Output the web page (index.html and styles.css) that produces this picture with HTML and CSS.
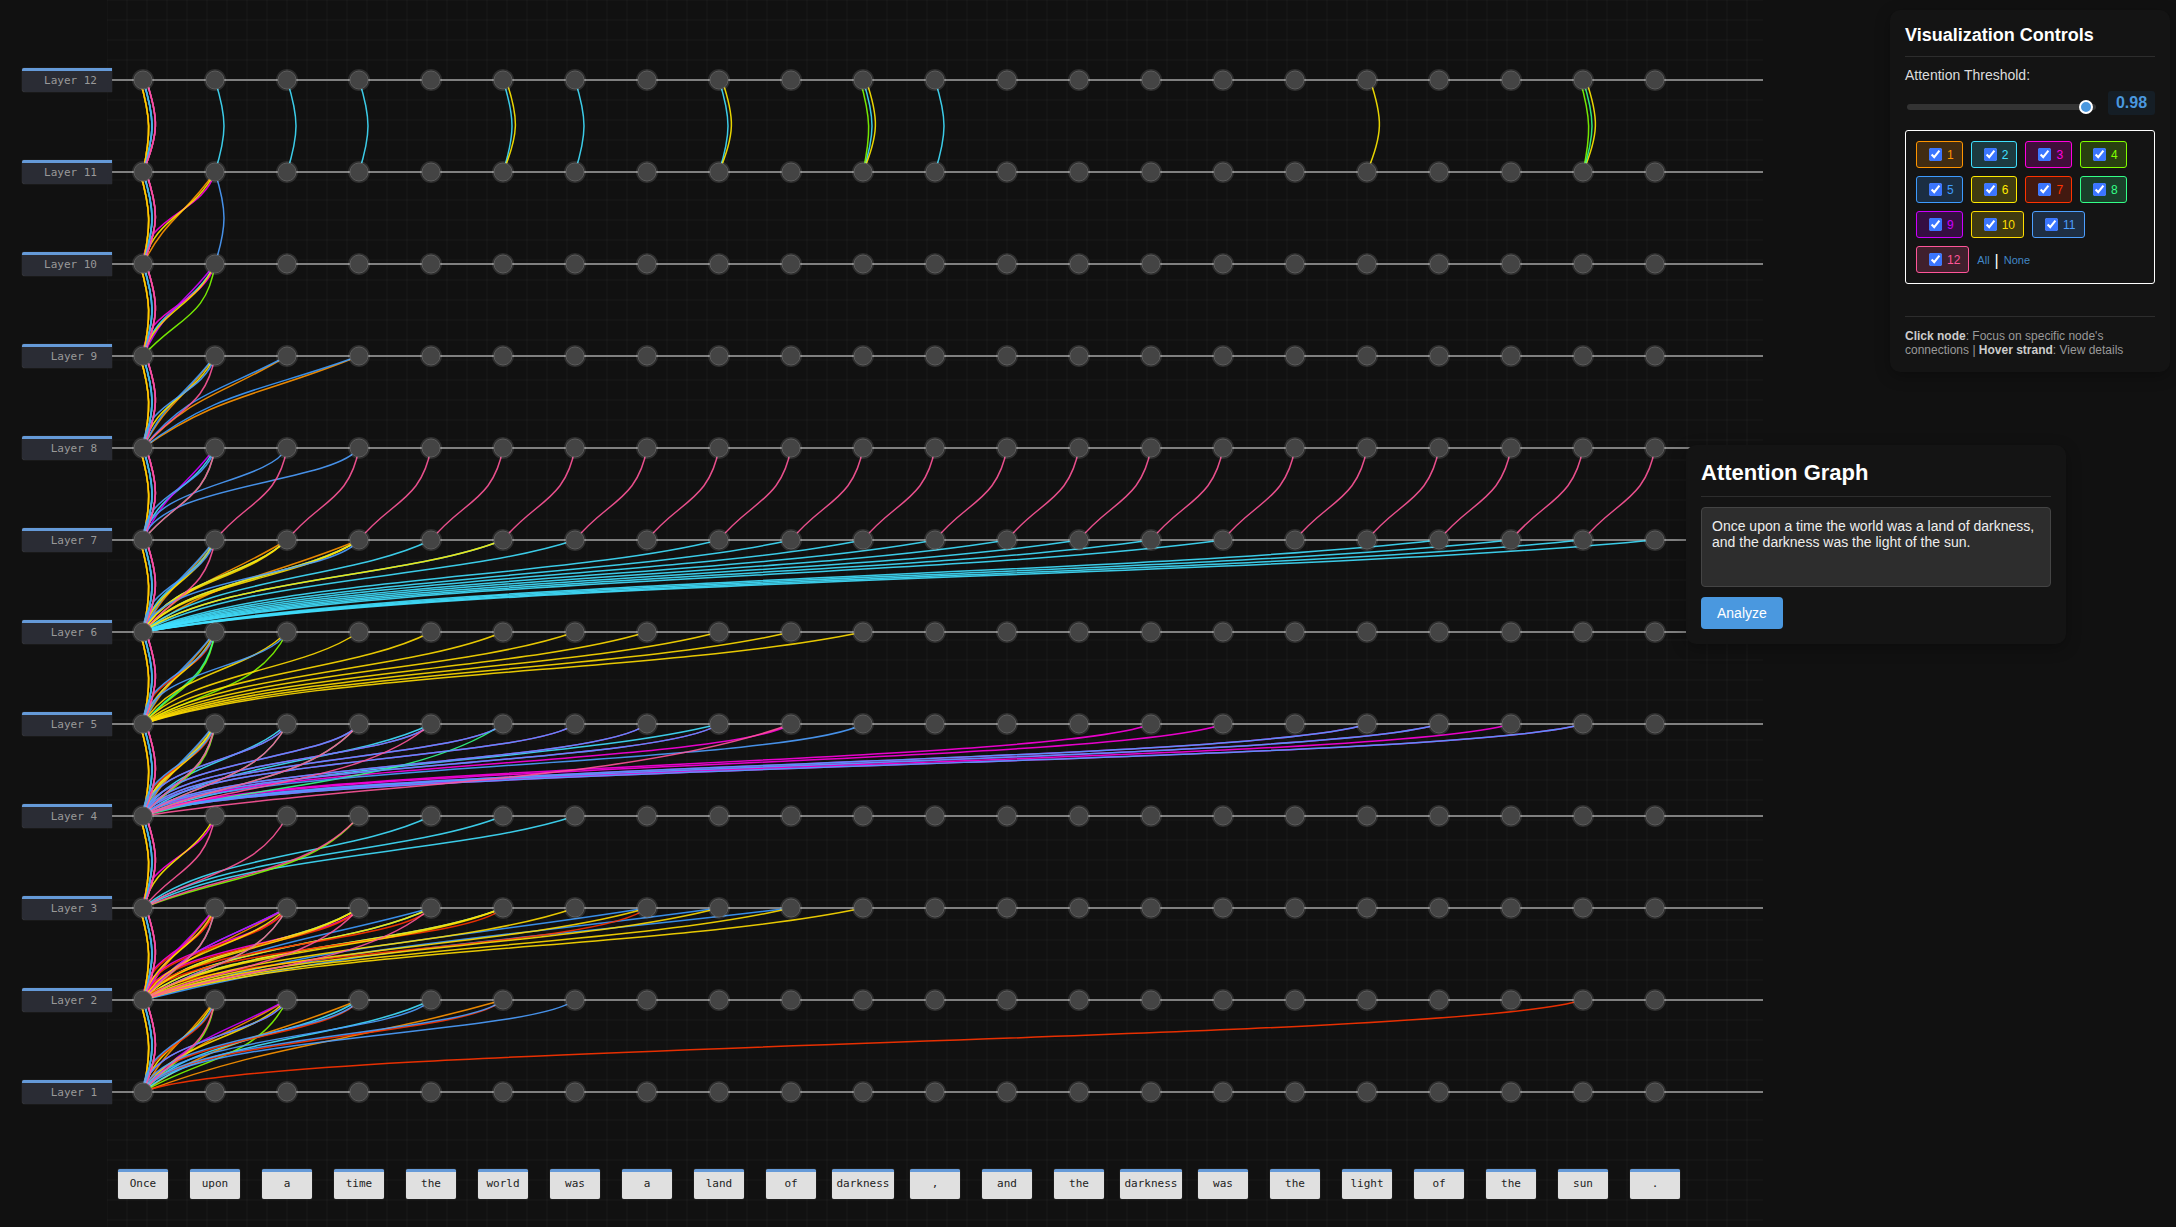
FILE: index.html
```html
<!DOCTYPE html>
<html lang="en">
<head>
<meta charset="utf-8">
<title>Attention Graph</title>
<link rel="stylesheet" href="styles.css">
</head>
<body>
<main class="graph">
  <ol class="layers" id="layers"></ol>
  <div class="canvas">
    <svg class="plot" id="plot" role="img" aria-label="Attention strands between layers">
      <g id="lines"></g>
      <g id="strands"></g>
      <g id="nodes"></g>
    </svg>
    <ul class="tokens" id="tokens"></ul>
  </div>
</main>

<aside class="panel controls">
  <h2 class="panel-title">Visualization Controls</h2>
  <label class="threshold-label" for="threshold">Attention Threshold:</label>
  <div class="threshold">
    <input class="slider" id="threshold" type="range" min="0" max="1" step="0.01" value="0.98">
    <output class="threshold-value" for="threshold">0.98</output>
  </div>
  <div class="heads">
    <label class="head h1"><input type="checkbox" checked>1</label>
    <label class="head h2"><input type="checkbox" checked>2</label>
    <label class="head h3"><input type="checkbox" checked>3</label>
    <label class="head h4"><input type="checkbox" checked>4</label>
    <label class="head h5"><input type="checkbox" checked>5</label>
    <label class="head h6"><input type="checkbox" checked>6</label>
    <label class="head h7"><input type="checkbox" checked>7</label>
    <label class="head h8"><input type="checkbox" checked>8</label>
    <label class="head h9"><input type="checkbox" checked>9</label>
    <label class="head h10"><input type="checkbox" checked>10</label>
    <label class="head h11"><input type="checkbox" checked>11</label>
    <label class="head h12"><input type="checkbox" checked>12</label>
    <div class="select-links"><a href="#all">All</a><span>|</span><a href="#none">None</a></div>
  </div>
  <p class="hint"><b>Click node</b>: Focus on specific node's connections | <b>Hover strand</b>: View details</p>
</aside>

<section class="panel prompt">
  <h1 class="panel-title prompt-title">Attention Graph</h1>
  <textarea class="prompt-text" aria-label="Text to analyze">Once upon a time the world was a land of darkness, and the darkness was the light of the sun.</textarea>
  <button class="analyze" type="button">Analyze</button>
</section>
<script src="graph.js"></script>
</body>
</html>
```
FILE: styles.css
```css
* { box-sizing: border-box; }

body {
  margin: 0;
  background: #111;
  color: #fff;
  font-family: "Liberation Sans", Arial, sans-serif;
  position: relative;
}

/* Graph */
.graph {
  display: flex;
  min-height: 100vh;
  padding-right: 413px;
}

.layers {
  list-style: none;
  flex: 0 0 85px;
  min-width: 0;
  display: flex;
  flex-direction: column;
  gap: 68px;
  margin: 0 0 0 22px;
  padding: 68px 0 0;
  z-index: 1;
}

.layer {
  width: 90px;
  height: 24px;
  padding-right: 15px;
  border-top: 3px solid #659ad8;
  border-radius: 2px 0 0 3px;
  background: #2a2c34;
  box-shadow: 0 0 1px #666;
  color: #999;
  font: 11px/20px "DejaVu Sans Mono", monospace;
  text-align: right;
}

.canvas {
  flex: 1;
  display: grid;
  background:
    linear-gradient(rgba(255, 255, 255, 0.014) 2px, transparent 2px) 0 -1px / 20px 20px,
    linear-gradient(90deg, rgba(255, 255, 255, 0.014) 2px, transparent 2px) -1px 0 / 20px 20px;
}

.plot {
  grid-area: 1 / 1;
  width: 100%;
  height: 100%;
}

.rail { stroke: #808080; stroke-width: 2; }
.strand { fill: none; stroke-width: 1.5; stroke-opacity: 0.9; }
.halo { fill: #fff; fill-opacity: 0.12; }
.node { fill: #444; stroke: #5c5c5c; stroke-width: 1; }

.tokens {
  grid-area: 1 / 1;
  align-self: end;
  display: flex;
  list-style: none;
  margin: 0;
  padding: 0 0 28px;
}

.slot {
  flex: 0 0 72px;
  display: flex;
  justify-content: center;
}

.token {
  min-width: 50px;
  height: 30px;
  padding: 0 5px;
  border-top: 3px solid #659ad8;
  border-radius: 2px;
  background: #e0e0e0;
  box-shadow: 0 0 1px #888;
  color: #222;
  font: 11px/24px "DejaVu Sans Mono", monospace;
  text-align: center;
}

/* Floating panels */
.panel {
  position: absolute;
  z-index: 2;
  padding: 15px;
  border-radius: 10px;
  background: #141414;
  box-shadow: 0 4px 15px rgba(0, 0, 0, 0.3);
}

.controls { top: 10px; right: 6px; width: 280px; }
.prompt { top: 445px; right: 110px; width: 380px; }

.panel-title {
  margin: 0 0 10px;
  padding-bottom: 11px;
  border-bottom: 1px solid #2d2d2d;
  font-size: 18px;
  line-height: 20px;
}

.prompt-title { font-size: 22px; line-height: 25px; }

.threshold-label {
  display: block;
  color: #ddd;
  font-size: 14px;
  line-height: 16px;
}

.threshold {
  display: flex;
  justify-content: space-between;
  margin: 8px 0 15px;
}

.slider {
  appearance: none;
  width: 189px;
  height: 6px;
  margin: 13px 0 0 2px;
  border-radius: 3px;
  background: #333;
}

.slider::-webkit-slider-thumb {
  appearance: none;
  width: 14px;
  height: 14px;
  border: 2px solid #fff;
  border-radius: 50%;
  background: #4a98df;
}

.threshold-value {
  width: 47px;
  height: 24px;
  border-radius: 3px;
  background: #151e26;
  color: #4a98df;
  font-size: 16px;
  font-weight: bold;
  line-height: 23px;
  text-align: center;
}

.heads {
  display: flex;
  flex-wrap: wrap;
  gap: 8px;
  padding: 10px;
  border: 1px solid #fff;
  border-radius: 3px;
}

.head {
  display: flex;
  align-items: center;
  height: 27px;
  padding: 0 8px;
  border: 1px solid;
  border-radius: 3px;
  font-size: 12px;
}

.head input {
  width: 13px;
  height: 13px;
  margin: 0 5px 0 4px;
  accent-color: #3b76ff;
}

.h1 { color: #ff9500; background: #412c12; }
.h2 { color: #40e0ff; background: #1c3a40; }
.h3 { color: #ff00e0; background: #400e3a; }
.h4 { color: #80ff00; background: #294010; }
.h5 { color: #3d9bff; background: #1b2e43; }
.h6 { color: #ffea00; background: #403c10; }
.h7 { color: #ff3300; background: #421910; }
.h8 { color: #33ff88; background: #1a402a; }
.h9 { color: #cc00ff; background: #350e42; }
.h10 { color: #ffdd00; background: #403a10; }
.h11 { color: #4d9fff; background: #1e2e43; }
.h12 { color: #ff5599; background: #40202d; }

.select-links {
  display: flex;
  align-items: center;
  gap: 5px;
  font-size: 11px;
}

.select-links a { color: #4287c6; text-decoration: none; }
.select-links span { font-size: 16px; line-height: 20px; padding-top: 2px; }

.hint {
  margin: 32px 0 0;
  padding-top: 12px;
  border-top: 1px solid #2d2d2d;
  color: #999;
  font-size: 12px;
  line-height: 14px;
}

.hint b { color: #ccc; }

.prompt-text {
  display: block;
  width: 100%;
  height: 80px;
  padding: 10px;
  border: 1px solid #444;
  border-radius: 4px;
  background: #2d2d2d;
  color: #eee;
  font: 14px/16px "Liberation Sans", Arial, sans-serif;
  resize: none;
}

.analyze {
  height: 32px;
  margin-top: 10px;
  padding: 0 16px;
  border: 0;
  border-radius: 4px;
  background: #4a98df;
  color: #fff;
  font: 14px/16px "Liberation Sans", Arial, sans-serif;
}
```
FILE: graph.js
```js
const NS = 'http://www.w3.org/2000/svg';
const words = ['Once', 'upon', 'a', 'time', 'the', 'world', 'was', 'a', 'land', 'of', 'darkness', ',',
  'and', 'the', 'darkness', 'was', 'the', 'light', 'of', 'the', 'sun', '.'];
const colors = ['', '#ff9500', '#40e0ff', '#ff00e0', '#80ff00', '#3d9bff', '#ffea00', '#ff3300',
  '#33ff88', '#cc00ff', '#ffdd00', '#4d9fff', '#ff5599'];
const LAYERS = 12, STEP = 72, ROW = 92;

// Strands that fan in to the first token of the layer below: layer -> source token -> heads.
const fan = {
  11: { 1: [1, 3, 6] },
  10: { 1: [2, 3, 4, 9, 10] },
  9: { 1: [1, 5, 6, 11, 12], 2: [1, 5], 3: [1, 5] },
  8: { 1: [2, 8, 9, 11, 12], 2: [11], 3: [11] },
  7: { 1: [1, 2, 5, 10, 11, 12], 2: [1, 2, 6, 10], 3: [1, 2, 6, 10, 11], 4: [2], 5: [2, 6], 6: [2], 8: [2], 9: [2],
    10: [2], 11: [2], 12: [2], 13: [2], 14: [2], 15: [2], 18: [2], 19: [2], 20: [2], 21: [2] },
  6: { 1: [1, 4, 5, 7, 8, 10, 11], 2: [4, 10, 11], 3: [10], 4: [10], 5: [10], 6: [10], 7: [10], 8: [10], 9: [10], 10: [10] },
  5: { 1: [1, 2, 4, 5, 6, 7, 8, 10, 11, 12], 2: [2, 3, 8, 11, 12], 3: [3, 8, 11, 12], 4: [2, 3, 11, 12], 5: [3, 8, 11],
    6: [3, 11], 7: [3, 11], 8: [2, 3, 11], 9: [3, 12], 10: [11], 14: [3], 15: [3], 17: [3, 11], 18: [3, 11], 19: [3], 20: [3, 11] },
  4: { 1: [3, 6, 12], 2: [12], 3: [4, 12], 4: [2], 5: [2], 6: [2] },
  3: { 1: [1, 3, 7, 8, 9, 10, 12], 2: [1, 3, 5, 7, 8, 9, 10, 12], 3: [2, 3, 6, 7, 10, 12], 4: [2, 5, 6, 7, 12],
    5: [2, 6, 7, 10], 6: [10], 7: [5, 7, 10], 8: [5, 10], 9: [5, 10], 10: [10] },
  2: { 1: [1, 4, 6, 7, 11, 12], 2: [1, 3, 4, 9, 10, 11], 3: [1, 2, 7, 11], 4: [2, 11], 5: [1, 7, 11], 6: [11], 20: [7] }
};
// Strands that stay on their own token.
const self = {
  12: { 1: [2], 2: [2], 3: [2], 5: [2, 6], 6: [2], 8: [2, 6], 10: [2, 4, 6], 11: [2], 17: [6], 20: [4, 6, 8] },
  11: { 1: [11] }
};

const nodeX = i => 36 + STEP * i;
const nodeY = layer => 80 + ROW * (LAYERS - layer);

function add(parent, name, attrs) {
  const el = document.createElementNS(NS, name);
  for (const key in attrs) el.setAttribute(key, attrs[key]);
  document.getElementById(parent).appendChild(el);
}

// Sideways push of a strand, by bend family, number of tokens crossed and lane.
function bend(family, span, lane) {
  const shift = lane < 0 ? 2 : 0;
  if (family === 0) return (span === 1 ? 11 : 13) + shift;
  if (family === 1) return span === 1 ? -4 + shift : lane < 0 && span > 3 ? -3 : -12 + 2 * shift;
  if (family === 2) return (span === 1 ? -4 : -8) + shift;
  return (span === 1 ? -6 : span < 7 ? -11 : -5) + shift;
}
const near = [0.25, 0.42, 0.26, 0.1];
const far = [0.32, 0.36, 0.22, 0.08];

function strand(layer, from, to, head) {
  const x0 = nodeX(from), y0 = nodeY(layer), x3 = nodeX(to), y3 = y0 + ROW;
  const lane = (head + 1) % 3 === 0 ? 0 : head % 3 === 0 ? 1 : -1;
  const dx = x3 - x0, span = from - to;
  let d;
  if (span === 0) {
    const push = 12 + 4 * lane;
    d = `M${x0 + 3 * lane} ${y0}C${x0 + push} ${y0 + 38} ${x0 + push} ${y0 + 54} ${x3} ${y3}`;
  } else {
    const len = Math.hypot(dx, ROW), family = head % 4;
    const push = bend(family, span, lane);
    const px = push * ROW / len, py = push * -dx / len;
    const c = [x0 + near[family] * dx + px, y0 + ROW / 2 + py, x3 - far[family] * dx + px, y3 - ROW / 2 + py];
    d = `M${x0} ${y0}C${c.map(n => n.toFixed(1)).join(' ')} ${x3} ${y3}`;
  }
  add('strands', 'path', { class: 'strand', d, stroke: colors[head] });
}

for (let layer = LAYERS; layer >= 1; layer--) {
  const label = document.createElement('li');
  label.className = 'layer';
  label.textContent = 'Layer ' + layer;
  document.getElementById('layers').appendChild(label);
  const y = nodeY(layer);
  add('lines', 'line', { class: 'rail', x1: 0, x2: '100%', y1: y, y2: y });
  for (let i = 0; i < words.length; i++) {
    add('nodes', 'circle', { class: 'halo', cx: nodeX(i), cy: y, r: 11 });
    add('nodes', 'circle', { class: 'node', cx: nodeX(i), cy: y, r: 9 });
  }
  if (layer === 1) continue;
  for (let head = 1; head <= 12; head++) {
    strand(layer, 0, 0, head);
    for (let i = 1; i < words.length; i++) {
      if (self[layer]?.[i]?.includes(head)) strand(layer, i, i, head);
      if (fan[layer]?.[i]?.includes(head)) strand(layer, i, 0, head);
      if (layer === 8 && head === 12 && i > 1) strand(layer, i, i - 1, head);
    }
  }
}

for (const word of words) {
  const slot = document.createElement('li');
  slot.className = 'slot';
  const token = document.createElement('span');
  token.className = 'token';
  token.textContent = word;
  slot.appendChild(token);
  document.getElementById('tokens').appendChild(slot);
}
```
